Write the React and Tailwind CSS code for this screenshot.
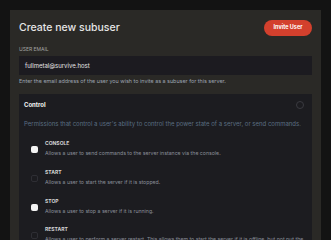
const PERMS = [
  { key: "CONSOLE", desc: "Allows a user to send commands to the server instance via the console.", on: true },
  { key: "START", desc: "Allows a user to start the server if it is stopped.", on: false },
  { key: "STOP", desc: "Allows a user to stop a server if it is running.", on: true },
  {
    key: "RESTART",
    desc: "Allows a user to perform a server restart. This allows them to start the server if it is offline, but not put the server in a completely stopped state.",
    on: false,
  },
];

const App = () => {
  return (
    <div
      className="w-[331px] h-[240px] overflow-hidden bg-[#131313] pt-[10px] pl-[10px] pr-[10px]"
      style={{ fontFamily: "Inter, 'Noto Sans', sans-serif" }}
    >
      <div className="bg-[#2a2926] px-[9px] pt-[10px] pb-4 h-[260px]">
        <div className="flex items-center justify-between h-4">
          <h2 className="text-[10.5px] font-medium text-[#e5e5e5] leading-none">Create new subuser</h2>
          <button className="h-4 w-[48px] rounded-full bg-[#d3402d] text-white text-[5.5px] font-bold leading-none">
            Invite User
          </button>
        </div>

        <div className="mt-[11px] text-[5px] uppercase text-[#a3a3a3] leading-none">User Email</div>
        <div className="mt-[4px] h-[19px] bg-[#1c1b20] flex items-center px-[6px] text-[6px] text-[#e5e5e5]">
          fullmetal@survive.host
        </div>
        <p className="mt-[4px] text-[5.4px] text-[#9ca3af] leading-none">
          Enter the email address of the user you wish to invite as a subuser for this server.
        </p>

        <div className="mt-[10px] bg-[#1c1c20] pl-[5px] pr-[8px] pt-[7px]">
          <div className="flex items-center justify-between">
            <span className="text-[6px] font-bold text-[#f5f5f5] leading-none">Control</span>
            <span className="w-[8px] h-[8px] rounded-full border border-[#3a3a40]" />
          </div>
          <p className="mt-[12px] text-[6px] text-[#5b6e82] leading-none">
            Permissions that control a user's ability to control the power state of a server, or send commands.
          </p>
          <div className="mt-[14px] flex flex-col gap-[12.7px] pl-[7px]">
            {PERMS.map((p) => (
              <div key={p.key} className="flex items-start gap-[7px]">
                <span
                  className={
                    p.on
                      ? "mt-[5px] w-[7px] h-[7px] rounded-[2px] bg-[#f3f3f3] shrink-0"
                      : "mt-[5px] w-[7px] h-[7px] rounded-[2px] border border-[#2e2e34] shrink-0"
                  }
                />
                <div className="flex flex-col gap-[4px]">
                  <span className="text-[5px] font-bold text-[#d4d4d4] leading-none">{p.key}</span>
                  <span className="text-[5.2px] text-[#8a8f99] leading-[7px]">{p.desc}</span>
                </div>
              </div>
            ))}
          </div>
        </div>
      </div>
    </div>
  );
};

export default App;
